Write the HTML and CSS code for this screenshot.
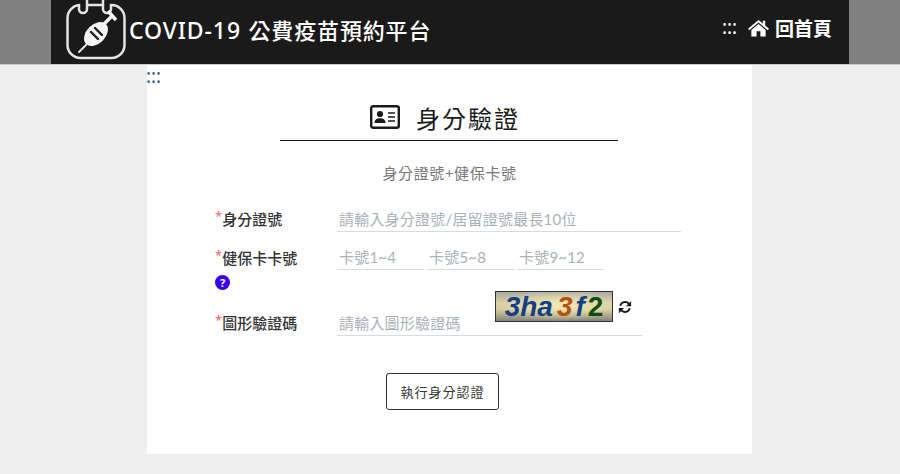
FILE: index.html
```html
<!DOCTYPE html>
<html lang="zh-Hant">
<head>
    <meta charset="UTF-8">
    <title>COVID-19 公費疫苗預約平台</title>
    <link rel="stylesheet" href="styles.css">
</head>
<body>
    <header class="topbar">
        <div class="topbar-inner">
            <a class="brand" href="#">
                <svg class="brand-logo" viewBox="0 0 62 62" aria-hidden="true">
                    <rect x="2.500" y="5" width="57" height="53" rx="13" fill="none" stroke="#e4e4e4" stroke-width="2.500"/>
                    <path d="M14 4 v5 a4 4 0 0 0 8 0 v-9 M38 0 v9 a4 4 0 0 0 8 0 v-5" fill="#1a1a1a" stroke="#e4e4e4" stroke-width="2.500"/>
                    <path d="M14 52 L24 42" stroke="#e4e4e4" stroke-width="2" stroke-linecap="round"/>
                    <ellipse cx="31" cy="34" rx="14" ry="9.500" transform="rotate(-45 31 34)" fill="#f4f4f4"/>
                    <path d="M30 28 L37 35 M26 32 L33 39" stroke="#1a1a1a" stroke-width="2.400" stroke-linecap="round"/>
                    <path d="M38 25 L47 16 M43 11 L51 20" stroke="#f4f4f4" stroke-width="3.400"/>
                </svg>
                <span class="brand-name"><span class="brand-latin">COVID-19</span> 公費疫苗預約平台</span>
            </a>
            <nav class="topnav">
                <a class="accesskey accesskey-light" href="#">:::</a>
                <a class="home-link" href="#">
                    <svg class="home-icon" viewBox="0 0 22 18" aria-hidden="true">
                        <path d="M11 0.500 L15.500 4.300 V1.500 H18 V6.400 L22 9.800 L20.700 11.300 L11 3.200 L1.300 11.300 L0 9.800 Z" fill="#fff"/>
                        <path d="M11 4.800 L18.500 11 V18 H13 V12.500 H9 V18 H3.500 V11 Z" fill="#fff"/>
                    </svg>
                    回首頁
                </a>
            </nav>
        </div>
    </header>

    <main class="card">
        <a class="accesskey" href="#">:::</a>
        <h1 class="page-title">
            <svg class="id-icon" viewBox="0 0 30 24" aria-hidden="true">
                <rect x="1.200" y="1.200" width="27.600" height="21.600" rx="2" fill="none" stroke="#1a1a1a" stroke-width="2.400"/>
                <circle cx="10" cy="9" r="3.100" fill="#1a1a1a"/>
                <path d="M4.500 18 C4.500 14.500 7 13.300 10 13.300 C13 13.300 15.500 14.500 15.500 18 Z" fill="#1a1a1a"/>
                <path d="M18 8 H25 M18 12 H25 M18 16 H25" stroke="#1a1a1a" stroke-width="1.500"/>
            </svg>
            <span>身分驗證</span>
        </h1>
        <p class="subtitle">身分證號+健保卡號</p>

        <form class="verify-form">
            <div class="form-row form-row-id">
                <label class="field-label"><span class="required">*</span>身分證號</label>
                <input class="text-input input-id" type="text" placeholder="請輸入身分證號/居留證號最長10位">
            </div>
            <div class="form-row form-row-card">
                <div class="field-label">
                    <span class="required">*</span>健保卡卡號
                    <span class="help-badge">?</span>
                </div>
                <div class="card-inputs">
                    <input class="text-input" type="text" placeholder="卡號1~4">
                    <input class="text-input" type="text" placeholder="卡號5~8">
                    <input class="text-input" type="text" placeholder="卡號9~12">
                </div>
            </div>
            <div class="form-row form-row-captcha">
                <label class="field-label"><span class="required">*</span>圖形驗證碼</label>
                <input class="text-input input-captcha" type="text" placeholder="請輸入圖形驗證碼">
                <div class="captcha">
                    <div class="captcha-image">
                        <span class="c-blue">3</span><span class="c-blue">h</span><span class="c-blue">a</span>
                        <span class="c-orange">3</span><span class="c-blue c-wide">f</span><span class="c-green">2</span>
                    </div>
                    <svg class="refresh-icon" viewBox="0 0 16 16" aria-hidden="true">
                        <path d="M2.500 6.500 A5.800 5.800 0 0 1 12.500 4.300 M13.500 9.500 A5.800 5.800 0 0 1 3.500 11.700" fill="none" stroke="#1a1a1a" stroke-width="2.200"/>
                        <path d="M15 1 V7 H9 Z M1 15 V9 H7 Z" fill="#1a1a1a"/>
                    </svg>
                </div>
            </div>
            <div class="form-actions">
                <button class="submit-button" type="button">執行身分認證</button>
            </div>
        </form>
    </main>
</body>
</html>
```

FILE: styles.css
```css
* {
    box-sizing: border-box;
}
body {
    margin: 0;
    height: 474px;
    overflow: hidden;
    background: #efefef;
    font-family: "Noto Sans", "Noto Sans CJK TC", sans-serif;
    color: #1a1a1a;
}
a {
    text-decoration: none;
}
.topbar {
    height: 65px;
    background: #808080;
    border-bottom: 1px solid #c8c8c8;
}
.topbar-inner {
    width: 798px;
    height: 64px;
    margin: 0 auto;
    padding: 0 17px 0 14px;
    background: #1a1a1a;
    display: flex;
    align-items: center;
    justify-content: space-between;
}
.brand {
    display: flex;
    align-items: center;
    gap: 2px;
    color: #fff;
}
.brand-logo {
    width: 62px;
    height: 62px;
    margin-bottom: 2px;
}
.brand-name {
    font-size: 22px;
    font-weight: 500;
    letter-spacing: 0.85px;
    margin-bottom: 5px;
}
.brand-latin {
    font-size: 23px;
    letter-spacing: 0.9px;
    margin-right: 1px;
}
.topnav {
    display: flex;
    align-items: center;
    gap: 11px;
    margin-bottom: 9px;
}
.home-link {
    display: flex;
    align-items: center;
    gap: 6px;
    color: #fff;
    font-size: 19px;
    font-weight: 700;
}
.home-icon {
    width: 21px;
    height: 18px;
}
.accesskey {
    display: block;
    color: #3b5a9e;
    font-size: 19px;
    font-weight: 400;
    letter-spacing: -0.1px;
    line-height: 13px;
    height: 14px;
}
.card .accesskey {
    width: 14px;
    margin-left: -1px;
}
.accesskey-light {
    color: #fff;
}
.card {
    width: 605px;
    height: 389px;
    margin-left: 147px;
    background: #fff;
    padding-top: 5px;
}
.page-title {
    width: 338px;
    height: 51px;
    margin: 6px 0 0 133px;
    padding: 4px 8px 0 0;
    border-bottom: 1px solid #1a1a1a;
    display: flex;
    align-items: center;
    justify-content: center;
    gap: 16px;
    font-size: 24px;
    font-weight: 400;
    letter-spacing: 2px;
}
.id-icon {
    width: 30px;
    height: 24px;
}
.subtitle {
    margin: 20px 0 0;
    text-align: center;
    font-size: 15px;
    letter-spacing: 0.6px;
    line-height: 24px;
    color: #777;
}
.verify-form {
    margin-top: 21px;
    padding-left: 68px;
}
.form-row {
    display: flex;
    align-items: flex-start;
    height: 38px;
}
.form-row-card {
    height: 66px;
}
.form-row-captcha {
    position: relative;
    height: 63px;
}
.field-label {
    width: 122px;
    flex: none;
    font-size: 15px;
    font-weight: 500;
    line-height: 24px;
    padding-top: 1px;
    color: #333;
}
.form-row-card .field-label {
    padding-top: 2px;
}
.required {
    color: #e66;
    font-size: 13px;
    font-weight: 400;
    position: relative;
    top: -4px;
}
.help-badge {
    display: block;
    width: 15px;
    height: 15px;
    margin-top: 4px;
    border-radius: 50%;
    background: #3a00f0;
    color: #fff;
    font-size: 11px;
    font-weight: 700;
    line-height: 15px;
    text-align: center;
}
.text-input {
    display: block;
    height: 26px;
    padding: 0 2px;
    border: none;
    border-bottom: 1px solid #d8dce0;
    outline: none;
    background: transparent;
    font-family: Lato, "Noto Sans CJK TC", sans-serif;
    font-size: 15px;
    letter-spacing: 0.2px;
}
.text-input::placeholder {
    color: #a9b1b9;
    opacity: 1;
}
.input-id {
    width: 344px;
}
.input-captcha {
    width: 305px;
}
.card-inputs {
    display: flex;
    gap: 3px;
}
.card-inputs .text-input {
    width: 87px;
}
.captcha {
    position: absolute;
    left: 280px;
    top: -19px;
    display: flex;
    align-items: center;
    gap: 5px;
}
.captcha-image {
    width: 118px;
    height: 31px;
    border: 1px solid #333;
    background:
        radial-gradient(ellipse at 55% 45%, #f3e8b4 0%, rgba(243, 232, 180, 0) 70%),
        linear-gradient(180deg, #a9a9a2 0%, #d9d0a4 40%, #d6cc9c 60%, #85857c 100%);
    display: flex;
    align-items: center;
    justify-content: center;
    font-family: "Liberation Sans", sans-serif;
    font-size: 28px;
    font-weight: 700;
    font-style: italic;
}
.c-blue {
    color: #123f85;
}
.c-orange {
    color: #b4520f;
    margin-left: 4px;
}
.c-wide {
    margin: 0 3px;
}
.c-green {
    color: #0f4d12;
    font-style: normal;
}
.refresh-icon {
    width: 14px;
    height: 14px;
}
.form-actions {
    display: flex;
    justify-content: center;
    margin-left: -82px;
}
.submit-button {
    width: 113px;
    height: 37px;
    background: #fff;
    border: 1px solid #333;
    border-radius: 3px;
    font-family: "Noto Sans", "Noto Sans CJK TC", sans-serif;
    font-size: 13px;
    letter-spacing: 1px;
    color: #333;
}
```
